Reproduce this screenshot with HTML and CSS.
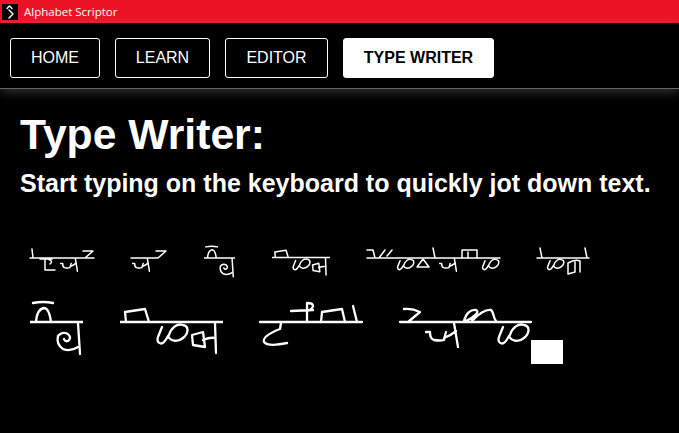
FILE: index.html
```html
<!DOCTYPE html>
<html lang="en">
<head>
    <meta charset="UTF-8">
    <meta name="viewport" content="width=device-width, initial-scale=1.0">
    <title>Alphabet Scriptor</title>
    <link rel="stylesheet" href="styles.css">
</head>
<body>

    <!-- Shared letters of the script -->
    <svg class="defs">
        <symbol id="bha" viewBox="496 322 36 24">
            <path d="M503 327 L499 337 C497 343 502 345 505 342 C507 340 508 338 509 336 C512 342 519 342 524 338 C530 333 530 326 524 325 C518 323 512 328 510 335"/>
        </symbol>
        <symbol id="ja" viewBox="425 322 34 26">
            <path d="M426 332 H430 Q430 339 434 340 Q440 341 444 340 Q445 335 446 332 M444 338 Q450 336 456 331 M454 323 L458 347"/>
        </symbol>
        <symbol id="word-ki" viewBox="30 300 53 56">
            <path d="M33 303 Q43 301 53 303 M36 322 Q37 309 44 308 Q49 308 51 322 M30 322 H83 M78 323 L80 354"/>
            <path d="M78 347 Q70 352 63 349 Q56 344 58 336 Q62 331 68 334 Q72 338 68 341 Q65 342 64 339"/>
        </symbol>
        <symbol id="word-bhm" viewBox="120 300 103 56">
            <path d="M120 322 H223 M126 322 L125 312 L145 309 L149 322 M215 323 L216 353"/>
            <path d="M192 335 L203 332 L205 347 L193 345 Z M203 340 Q210 337 215 338"/>
            <path d="M162 327 L158 337 C156 343 161 345 164 342 C166 340 167 338 168 336 C171 342 178 342 183 338 C189 333 189 326 183 325 C177 323 171 328 169 335"/>
        </symbol>
    </svg>

    <header class="titlebar">
        <span class="app-icon">
            <svg class="icon-svg" viewBox="0 0 16 16" width="16" height="16">
                <path d="M5 4.5 L7.5 2 L10 4.5 M7 6 L11 10 L7 14"/>
            </svg>
        </span>
        <span class="app-name">Alphabet Scriptor</span>
    </header>

    <nav class="nav">
        <a class="nav-btn btn-home">HOME</a>
        <a class="nav-btn btn-learn">LEARN</a>
        <a class="nav-btn btn-editor">EDITOR</a>
        <a class="nav-btn active btn-writer">TYPE WRITER</a>
    </nav>

    <main class="content">
        <h1>Type Writer:</h1>
        <h2>Start typing on the keyboard to quickly jot down text.</h2>

        <div class="script-line small">
            <svg class="word" width="64" height="36" viewBox="30 245 64 36">
                <path d="M30 258 H94 M32 249 L33 258 M83 251 H93 L85 258"/>
                <path d="M40 259 H52 M45 259 V270 H55 M48 259 Q54 261 50 264"/>
                <use href="#ja" x="60" y="258" width="18" height="14"/>
            </svg>
            <svg class="word" width="36" height="36" viewBox="131 245 36 36">
                <path d="M131 258 H158 M156 251 H166 L158 258"/>
                <use href="#ja" x="132" y="258" width="18" height="14"/>
            </svg>
            <svg class="word" width="31" height="36" viewBox="0 0 31 36">
                <use href="#word-ki" x="0" y="0" width="31" height="33"/>
            </svg>
            <svg class="word" width="58" height="36" viewBox="0 0 58 36">
                <use href="#word-bhm" x="0" y="0" width="58" height="32"/>
            </svg>
            <svg class="word" width="133" height="36" viewBox="367 245 133 36">
                <path d="M367 258 H500 M367 250 H373 L375 258 M379 258 L385 250 M387 256 L392 250"/>
                <use href="#bha" x="396" y="258" width="20" height="13"/>
                <path d="M417 267 L423 259 L429 267 Z M433 248 L435 258"/>
                <use href="#ja" x="439" y="258" width="18" height="14"/>
                <path d="M462 258 V250 H477 V258 M468 252 V258"/>
                <use href="#bha" x="481" y="258" width="20" height="13"/>
            </svg>
            <svg class="word" width="53" height="36" viewBox="537 245 53 36">
                <path d="M537 258 H589 M540 248 L542 258 M585 248 L587 258"/>
                <use href="#bha" x="546" y="258" width="20" height="13"/>
                <path d="M568 274 V263 Q575 259 580 261 V272 M568 274 L575 272 V262"/>
            </svg>
        </div>

        <div class="script-line">
            <svg class="word" width="53" height="56" viewBox="0 0 53 56">
                <use href="#word-ki" width="53" height="56"/>
            </svg>
            <svg class="word" width="103" height="56" viewBox="0 0 103 56">
                <use href="#word-bhm" width="103" height="56"/>
            </svg>
            <svg class="word" width="103" height="56" viewBox="260 300 103 56">
                <path d="M260 322 H362 M281 323 L280 329 Q262 336 264 342 Q268 347 287 343"/>
                <path d="M291 311 L313 310 M307 322 V303 Q313 303 313 306 Q312 310 307 311"/>
                <path d="M321 322 L322 312 L342 309 L345 322 M353 306 L357 322"/>
            </svg>
            <div class="last-word">
                <svg class="word" width="131" height="56" viewBox="400 300 131 56">
                    <path d="M400 322 H531 M404 309 Q412 308 420 312 L408 322"/>
                    <path d="M464 321 C466 313 471 309 476 310 C480 311 475 317 466 321 M472 321 C478 314 486 309 491 310 C494 312 493 318 496 321"/>
                    <use href="#ja" x="425" y="322" width="34" height="26"/>
                    <use href="#bha" x="496" y="322" width="36" height="24"/>
                </svg>
                <span class="cursor"></span>
            </div>
        </div>
    </main>

</body>
</html>
```

FILE: styles.css
```css
body {
    margin: 0;
    background-color: #000;
    color: #fff;
    font-family: 'Liberation Sans', Arial, sans-serif;
    overflow: hidden;
}

.defs {
    display: none;
}

.titlebar {
    display: flex;
    align-items: center;
    height: 23px;
    padding-left: 2px;
    background-color: #ec1327;
}

.app-icon {
    display: flex;
    width: 16px;
    height: 16px;
    background-color: #000;
}

.icon-svg {
    stroke-width: 1.4;
}

.app-name {
    margin-left: 6px;
    font-family: 'Open Sans', sans-serif;
    font-size: 11.5px;
}

.nav {
    display: flex;
    gap: 15px;
    height: 66px;
    padding: 15px 10px 0;
    box-sizing: border-box;
    border-bottom: 1px solid #666;
    box-shadow: 0 3px 10px rgba(255, 255, 255, 0.2);
}

.nav-btn {
    display: flex;
    align-items: center;
    justify-content: center;
    height: 40px;
    box-sizing: border-box;
    border: 1px solid #fff;
    border-radius: 3px;
    font-size: 16px;
}

.btn-home { width: 90px; }
.btn-learn { width: 95px; }
.btn-editor { width: 103px; }
.btn-writer { width: 151px; }

.active {
    background-color: #fff;
    color: #000;
    font-weight: bold;
}

.content {
    padding: 20px 20px 0;
}

h1 {
    margin: 0;
    font-size: 42.67px;
    line-height: 50px;
}

h2 {
    margin: 8px 0 0;
    font-size: 25px;
    line-height: 32px;
}

.script-line {
    display: flex;
    gap: 37px;
    margin-left: 10px;
}

.small {
    margin-top: 46px;
    margin-bottom: 19px;
}

.last-word {
    display: flex;
}

.cursor {
    width: 32px;
    height: 24px;
    margin-top: 40px;
    background-color: #fff;
}

.word {
    display: block;
    flex-shrink: 0;
    overflow: visible;
    stroke-width: 2.3;
}

.small .word {
    stroke-width: 1.5;
}

path {
    fill: none;
    stroke: #fff;
    stroke-linecap: round;
    stroke-linejoin: round;
    vector-effect: non-scaling-stroke;
}
```
